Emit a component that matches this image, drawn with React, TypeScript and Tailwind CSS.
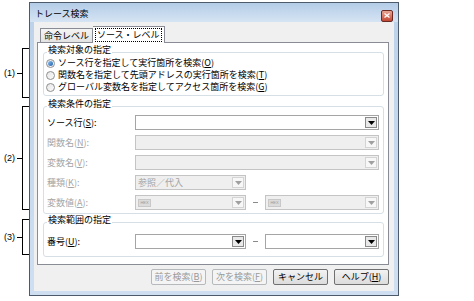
import React from "react";

const F = "font-['Noto_Sans_CJK_JP','Noto_Sans_CJK_SC',sans-serif]";

function M({ t }: { t: string }) {
  const i = t.indexOf("&");
  if (i < 0) return <>{t}</>;
  return (
    <>
      {t.slice(0, i)}
      <span className="underline underline-offset-[1px] decoration-1">{t[i + 1]}</span>
      {t.slice(i + 2)}
    </>
  );
}

function Arrow({ dis }: { dis?: boolean }) {
  return (
    <svg width="7" height="4" viewBox="0 0 7 4">
      <path d="M0 0H7L3.5 4Z" fill={dis ? "#a0a0a0" : "#000"} />
    </svg>
  );
}

function Combo({ w, dis, text, hex }: { w: string; dis?: boolean; text?: string; hex?: boolean }) {
  return (
    <div
      className={`${w} h-[15px] flex items-center border pl-[2px] pr-px ${
        dis ? "border-[#c4c4c4] bg-[#efefef]" : "border-[#a5a5a5] bg-white"
      }`}
    >
      <div className="flex-1 flex items-center h-full overflow-hidden">
        {hex && (
          <span className="flex items-center justify-center w-[13px] h-[8px] bg-[#dcdcdc] border border-[#c8c8c8] text-[4px] leading-none text-[#9a9a9a] font-['Liberation_Sans',sans-serif]">
            HEX
          </span>
        )}
        {text && <span className="text-[9px] leading-[12px] text-[#a3a3a3]">{text}</span>}
      </div>
      <div
        className={`w-[12px] h-[11px] flex items-center justify-center border ${
          dis ? "border-[#d4d4d4] bg-[#f7f7f7]" : "border-[#8a8a8a] bg-[#e9e9e9]"
        }`}
      >
        <Arrow dis={dis} />
      </div>
    </div>
  );
}

function Dash() {
  return (
    <div className="w-[19px] flex justify-center">
      <div className="w-[5px] h-px bg-[#8a8a8a]" />
    </div>
  );
}

function Radio({ on }: { on?: boolean }) {
  return (
    <div className="w-[9px] h-[9px] rounded-full border border-[#8e8f8f] bg-gradient-to-br from-[#e6e6e6] to-[#fbfbfb] flex items-center justify-center">
      {on && <div className="w-[5px] h-[5px] rounded-full bg-gradient-to-br from-[#8cc4f5] to-[#1b5ea8]" />}
    </div>
  );
}

function Group({ title, className, children }: { title: string; className: string; children: React.ReactNode }) {
  return (
    <div className={`relative border border-[#d5dfe5] rounded-[3px] ${className}`}>
      <span className="absolute left-[3px] top-[-8px] bg-white px-px text-[9px] leading-[10px] text-black">{title}</span>
      {children}
    </div>
  );
}

function Row({ label, dis, children }: { label: string; dis?: boolean; children: React.ReactNode }) {
  return (
    <div className="flex items-center h-[15px] pl-[3px] pr-[4px]">
      <span className={`w-[88px] text-[9px] leading-[12px] ${dis ? "text-[#a5a5a5]" : "text-black"}`}>
        <M t={label} />
      </span>
      {children}
    </div>
  );
}

function Btn({ label, dis }: { label: string; dis?: boolean }) {
  return (
    <div
      className={`w-[55px] h-[16px] flex items-center justify-center rounded-[2px] border text-[9px] leading-[12px] ${
        dis
          ? "border-[#b5b9bc] bg-[#f4f4f4] text-[#9a9a9a]"
          : "border-[#707070] bg-gradient-to-b from-[#f2f2f2] to-[#dcdcdc] text-black"
      }`}
    >
      <span>
        <M t={label} />
      </span>
    </div>
  );
}

function Bracket({ label, h }: { label: string; h: string }) {
  return (
    <div className={`flex items-center ${h}`}>
      <span className="w-[17px] text-right pr-[2px] text-[9px] leading-none font-['Liberation_Sans',sans-serif] text-black">{label}</span>
      <div className="w-[5px] h-px bg-black" />
      <div className="h-full w-[7px] border-l border-t border-b border-black" />
    </div>
  );
}

const radios: [string, boolean][] = [
  ["ソース行を指定して実行箇所を検索(&O)", true],
  ["関数名を指定して先頭アドレスの実行箇所を検索(&T)", false],
  ["グローバル変数名を指定してアクセス箇所を検索(&G)", false],
];

export default function App() {
  return (
    <div className={`relative w-[474px] h-[301px] bg-white flex ${F}`}>
      {/* annotation brackets */}
      <div className="w-[29px] flex flex-col">
        <div className="h-[48px]" />
        <Bracket label="(1)" h="h-[50px]" />
        <div className="h-[8px]" />
        <Bracket label="(2)" h="h-[104px]" />
        <div className="h-[9px]" />
        <Bracket label="(3)" h="h-[36px]" />
      </div>

      {/* window */}
      <div className="mt-[2px] w-[370px] h-[294px] border border-[#4d5a6b] flex flex-col bg-gradient-to-b from-[#bcd2ea] to-[#cfdff1]">
        <div className="h-[19px] flex items-center pl-[5px] pr-[5px] bg-gradient-to-b from-[#b4cce7] to-[#d6e4f3]">
          <span className="text-[9px] leading-[12px] text-black flex-1 mt-[3px]">トレース検索</span>
          <div className="w-[12px] h-[12px] mt-[6px] rounded-[2px] border border-[#6b2a24] bg-gradient-to-b from-[#e8a493] to-[#c24632] flex items-center justify-center">
            <svg width="6" height="5" viewBox="0 0 6 5">
              <path d="M0.5 0.5L5.5 4.5M5.5 0.5L0.5 4.5" stroke="#fff" strokeWidth="1.3" />
            </svg>
          </div>
        </div>
        <div className="flex-1 mx-[4px] mb-[4px] bg-[#f0f0f0] flex flex-col pl-[3px] pr-[5px]">
          {/* tabs */}
          <div className="h-[20px] flex items-end pl-[3px]">
            <div className="h-[14px] px-[3px] flex items-center border border-b-0 border-[#898c95] bg-gradient-to-b from-[#f4f4f4] to-[#e3e3e3] text-[9px] leading-[12px] text-black">
              命令レベル
            </div>
            <div className="h-[17px] mb-[-1px] relative z-10 px-[2px] flex items-center border border-b-0 border-l-0 border-[#898c95] bg-white">
              <span className="border border-dotted border-black px-px text-[9px] leading-[12px] text-black">ソース・レベル</span>
            </div>
          </div>
          {/* panel */}
          <div className="h-[223px] border border-[#898c95] bg-white flex flex-col pl-[5px] pr-[4px] pt-[9px]">
            <Group title="検索対象の指定" className="h-[44px] pt-[4px] pl-[2px]">
              {radios.map(([t, on]) => (
                <div key={t} className="h-[12px] flex items-center gap-[3px]">
                  <Radio on={on} />
                  <span className="text-[9px] leading-[10px] text-black">
                    <M t={t} />
                  </span>
                </div>
              ))}
            </Group>

            <Group title="検索条件の指定" className="mt-[10px] h-[108px] pt-[8px] flex flex-col gap-[5px]">
              <Row label="ソース行(&S):">
                <Combo w="flex-1" />
              </Row>
              <Row label="関数名(&N):" dis>
                <Combo w="flex-1" dis />
              </Row>
              <Row label="変数名(&V):" dis>
                <Combo w="flex-1" dis />
              </Row>
              <Row label="種類(&K):" dis>
                <Combo w="w-[111px]" dis text="参照／代入" />
              </Row>
              <Row label="変数値(&A):" dis>
                <Combo w="w-[111px]" dis hex />
                <Dash />
                <Combo w="flex-1" dis hex />
              </Row>
            </Group>

            <Group title="検索範囲の指定" className="mt-[8px] h-[35px] pt-[11px]">
              <Row label="番号(&U):">
                <Combo w="w-[111px]" />
                <Dash />
                <Combo w="flex-1" />
              </Row>
            </Group>
          </div>
          {/* buttons */}
          <div className="mt-[4px] flex justify-end gap-[6px]">
            <Btn label="前を検索(&B)" dis />
            <Btn label="次を検索(&F)" dis />
            <Btn label="キャンセル" />
            <Btn label="ヘルプ(&H)" />
          </div>
        </div>
      </div>
    </div>
  );
}
